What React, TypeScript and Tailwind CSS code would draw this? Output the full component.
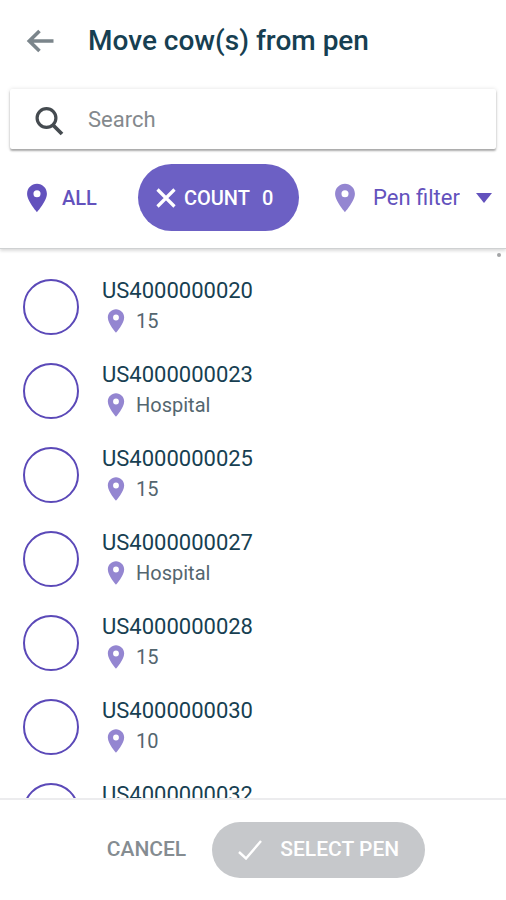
import { useState } from 'react';

const cows = [
  { id: 'US4000000020', pen: '15' },
  { id: 'US4000000023', pen: 'Hospital' },
  { id: 'US4000000025', pen: '15' },
  { id: 'US4000000027', pen: 'Hospital' },
  { id: 'US4000000028', pen: '15' },
  { id: 'US4000000030', pen: '10' },
  { id: 'US4000000032', pen: '10' },
];

function PinIcon({ className }: { className: string }) {
  return (
    <svg viewBox="0 0 24 24" fill="currentColor" className={className} aria-hidden="true">
      <path d="M12 2C8.13 2 5 5.13 5 9c0 5.25 7 13 7 13s7-7.75 7-13c0-3.87-3.13-7-7-7zm0 9.5a2.5 2.5 0 0 1 0-5 2.5 2.5 0 0 1 0 5z" />
    </svg>
  );
}

export default function App() {
  const [search, setSearch] = useState('');
  const [selected, setSelected] = useState<string[]>([]);

  const toggle = (id: string) => {
    setSelected((prev) => (prev.includes(id) ? prev.filter((x) => x !== id) : [...prev, id]));
  };

  const visible = cows.filter((cow) => cow.id.includes(search.toUpperCase()));

  return (
    <div className="flex h-screen flex-col bg-white font-['Roboto',sans-serif] text-[#173f52]">
      {/* Top bar, search and filters */}
      <header className="relative z-10 border-b border-[#cfd1d2] pb-[17px] shadow-[0_2px_3px_rgba(0,0,0,0.14)]">
        <div className="flex h-[81px] items-center gap-8 pl-6">
          <button type="button" aria-label="Back" className="text-[#7b858b]">
            <svg viewBox="0 0 32 32" fill="none" stroke="currentColor" strokeWidth="3.6" className="size-8" aria-hidden="true">
              <path d="M29.5 16H5M15.500 6 5.3 16l10.200 10" />
            </svg>
          </button>
          <h1 className="text-[28px] leading-8 font-medium">Move cow(s) from pen</h1>
        </div>

        <label className="mx-[10px] mt-2 flex h-[60px] items-center gap-6 rounded-xs bg-white pl-[22px] shadow-[0_2px_2px_rgba(0,0,0,0.3),0_0_4px_rgba(0,0,0,0.12)]">
          <svg viewBox="0 0 32 32" fill="none" stroke="#454b50" strokeWidth="3.2" className="mt-1 size-8" aria-hidden="true">
            <circle cx="14.5" cy="13" r="9.4" />
            <path d="m21 20 9 9" strokeWidth="3.8" />
          </svg>
          <input
            type="text"
            aria-label="Search"
            placeholder="Search"
            value={search}
            onChange={(e) => setSearch(e.target.value)}
            className="min-w-0 flex-1 text-[22px] outline-none placeholder:text-[#84898d]"
          />
        </label>

        <div className="mt-[15px] flex items-center justify-between pr-[14px] pl-5">
          <button type="button" className="flex items-center gap-2 pr-3 text-xl font-medium text-[#6352bd]">
            <PinIcon className="size-[34px]" />
            ALL
          </button>
          <button
            type="button"
            onClick={() => setSelected([])}
            className="flex h-[67px] w-[161px] items-center gap-2 rounded-full bg-[#6c60c4] pl-[18px] text-xl font-medium text-white"
          >
            <svg viewBox="0 0 20 20" fill="none" stroke="currentColor" strokeWidth="3.200" className="size-5" aria-hidden="true">
              <path d="m1.5 1.5 17 17M18.5 1.5l-17 17" />
            </svg>
            <span>COUNT</span>
            <span className="ml-1">{selected.length}</span>
          </button>
          <label className="flex items-center text-[#6352bd]">
            <PinIcon className="size-[34px] text-[#9486d1]" />
            <select aria-label="Pen filter" className="ml-[11px] appearance-none bg-transparent text-[22px]">
              <option>Pen filter</option>
            </select>
            <svg viewBox="0 0 16 10" fill="currentColor" className="ml-4 h-[10px] w-4" aria-hidden="true">
              <path d="M0 0h16L8 10z" />
            </svg>
          </label>
        </div>
      </header>

      <main className="relative min-h-0 flex-1 overflow-hidden">
        <span className="absolute top-1 right-[5px] size-1 rounded-full bg-[#a3a5a7]" />
        <ul className="pt-4">
          {visible.map((cow) => (
            <li key={cow.id}>
              <label className="flex h-[84px] items-center gap-[23px] pl-[23px]">
                <input
                  type="checkbox"
                  checked={selected.includes(cow.id)}
                  onChange={() => toggle(cow.id)}
                  className="size-14 shrink-0 appearance-none rounded-full border-2 border-[#5b49b8] checked:bg-[#5b49b8]"
                />
                <span className="flex flex-col pb-[2px]">
                  <span className="text-[22px] leading-[30px]">{cow.id}</span>
                  <span className="flex items-center gap-[6px] text-xl leading-[30px] text-[#54666f]">
                    <PinIcon className="size-7 text-[#9486d1]" />
                    {cow.pen}
                  </span>
                </span>
              </label>
            </li>
          ))}
        </ul>
      </main>

      <footer className="flex h-[102px] items-center justify-center border-t-2 border-[#ececee] bg-white text-[21px] font-medium">
        <button type="button" className="px-[26px] text-[#858c91]">
          CANCEL
        </button>
        <button type="button" className="flex h-14 w-[213px] items-center justify-center gap-[18px] rounded-full bg-[#c6c8cb] text-white">
          <svg viewBox="0 0 24 20" fill="none" stroke="currentColor" strokeWidth="2.4" className="h-5 w-6" aria-hidden="true">
            <path d="m1 12 7 6.5L23 1" />
          </svg>
          SELECT PEN
        </button>
      </footer>
    </div>
  );
}
